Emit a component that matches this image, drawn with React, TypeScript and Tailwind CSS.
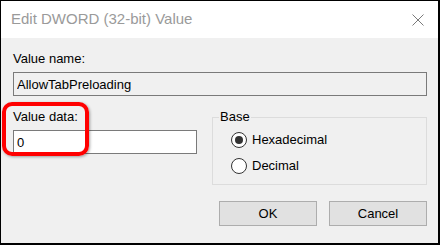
// App.tsx - Edit DWORD dialog

const font = { fontFamily: '"Liberation Sans", Arial, sans-serif' };

function CloseIcon() {
  return (
    <svg width="12" height="12" viewBox="0 0 12 12" fill="none">
      <path d="M0.5 0.5 L11.5 11.5 M11.5 0.5 L0.5 11.5" stroke="#7a7a7a" strokeWidth="1" />
    </svg>
  );
}

function Radio({ label, checked }: { label: string; checked?: boolean }) {
  return (
    <label className="flex h-[16px] items-center gap-[5px]">
      <span className="flex h-[16px] w-[16px] items-center justify-center rounded-full border border-[#333333] bg-white">
        {checked && <span className="h-[8px] w-[8px] rounded-full bg-[#333333]" />}
      </span>
      <span className="leading-[16px]">{label}</span>
    </label>
  );
}

export default function App() {
  return (
    <div
      className="relative h-[245px] w-[440px] bg-black pb-[2px] pl-px pr-[2px] pt-px text-[13px] text-black"
      style={font}
    >
      <div className="flex h-full flex-col bg-[#f0f0f0]">
        {/* title bar */}
        <div className="flex h-[37px] items-center justify-between bg-white pl-[10px] pr-[14px]">
          <span className="text-[15px] text-[#9a9a9a]">Edit DWORD (32-bit) Value</span>
          <CloseIcon />
        </div>

        <div className="flex flex-col pl-[12px] pr-[11px] pt-[13px]">
          <p className="leading-[16px]">Value name:</p>
          <input
            readOnly
            value="AllowTabPreloading"
            className="mt-[5px] h-[24px] w-full border border-[#7a7a7a] bg-[#f0f0f0] px-[3px] leading-[16px] outline-none"
          />

          <div className="mt-[13px] flex items-start gap-[15px]">
            <div className="flex w-[184px] flex-col">
              <p className="leading-[16px]">Value data:</p>
              <input
                readOnly
                value="0"
                className="mt-[5px] h-[24px] w-full border border-[#7a7a7a] bg-white px-[3px] leading-[16px] outline-none"
              />
            </div>

            <fieldset className="h-[76px] flex-1 border border-[#dcdcdc] pb-[10px] pl-[18px] pt-[7px]">
              <legend className="ml-[-12px] px-[1px] leading-[16px]">Base</legend>
              <div className="flex flex-col gap-[10px]">
                <Radio label="Hexadecimal" checked />
                <Radio label="Decimal" />
              </div>
            </fieldset>
          </div>

          <div className="mt-[16px] flex justify-end gap-[12px]">
            <button className="h-[25px] w-[98px] border border-[#adadad] bg-[#e1e1e1]">OK</button>
            <button className="h-[25px] w-[98px] border border-[#adadad] bg-[#e1e1e1]">Cancel</button>
          </div>
        </div>
      </div>

      {/* red highlight around Value data */}
      <div className="pointer-events-none absolute left-[2px] top-[102px] h-[54px] w-[87px] rounded-[10px] border-4 border-[#ff0000] shadow-[1px_1px_3px_rgba(0,0,0,0.35)]" />
    </div>
  );
}
